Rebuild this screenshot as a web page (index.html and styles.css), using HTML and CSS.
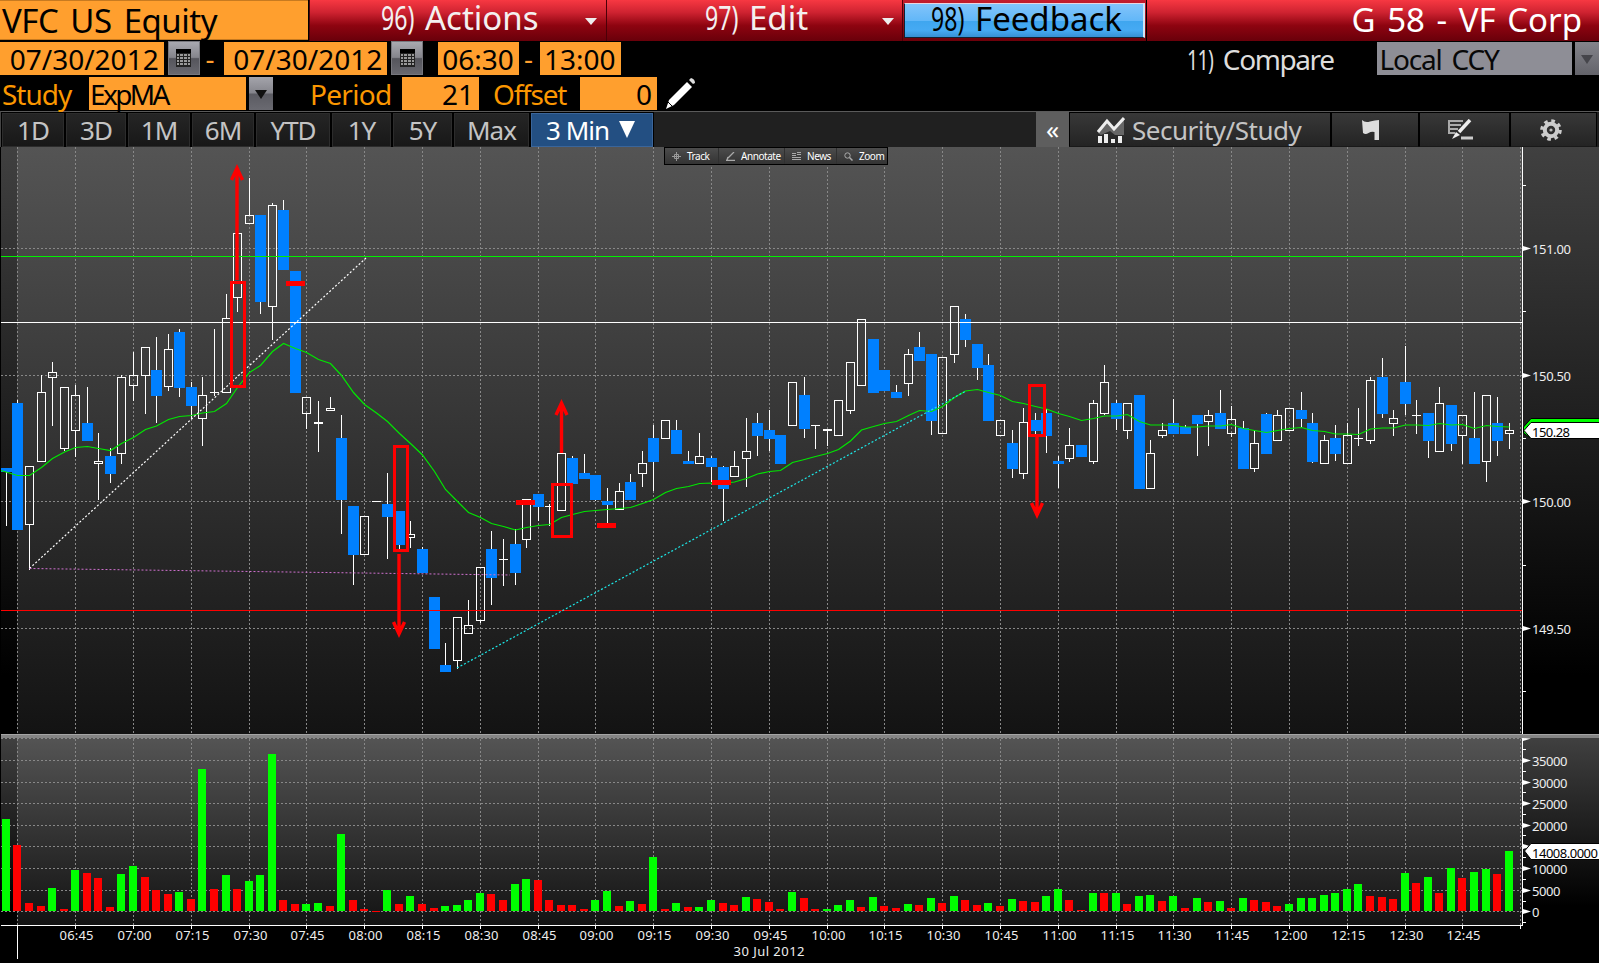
FILE: index.html
```html
<!DOCTYPE html>
<html lang="en">
  <head>
    <meta charset="utf-8" />
    <title>VFC US Equity - Intraday Chart</title>
    <link rel="stylesheet" href="styles.css">
  </head>
  <body>
    <header class="title-bar">
      <div class="ticker">VFC US Equity</div>
      <div class="menu menu-actions"><span class="num">96)</span><span class="menu-label">Actions</span><i class="caret"></i></div>
      <div class="menu menu-edit"><span class="num">97)</span><span class="menu-label">Edit</span><i class="caret"></i></div>
      <div class="menu menu-feedback">
        <div class="feedback"><span class="num">98)</span><span class="menu-label">Feedback</span></div>
      </div>
      <div class="page-title">G 58 - VF Corp</div>
    </header>

    <div class="row dates">
      <div class="field date">07/30/2012</div>
      <div class="cal-btn">
        <svg width="15" height="18" viewBox="0 0 15 18">
          <rect width="15" height="18" fill="#222" />
          <path d="M1 5h2v2H1zM4 5h3v2H4zM8 5h3v2H8zM12 5h2v2h-2zM1 8h2v2H1zM4 8h3v2H4zM8 8h3v2H8zM12 8h2v2h-2zM1 11h2v2H1zM4 11h3v2H4zM8 11h3v2H8zM12 11h2v2h-2zM1 14h2v2H1zM4 14h3v2H4zM8 14h3v2H8zM12 14h2v2h-2z" fill="#999" />
          <path d="M0 0h15v4H0z" fill="#000" />
        </svg>
      </div>
      <div class="dash wide">-</div>
      <div class="field date">07/30/2012</div>
      <div class="cal-btn">
        <svg width="15" height="18" viewBox="0 0 15 18">
          <rect width="15" height="18" fill="#222" />
          <path d="M1 5h2v2H1zM4 5h3v2H4zM8 5h3v2H8zM12 5h2v2h-2zM1 8h2v2H1zM4 8h3v2H4zM8 8h3v2H8zM12 8h2v2h-2zM1 11h2v2H1zM4 11h3v2H4zM8 11h3v2H8zM12 11h2v2h-2zM1 14h2v2H1zM4 14h3v2H4zM8 14h3v2H8zM12 14h2v2h-2z" fill="#999" />
          <path d="M0 0h15v4H0z" fill="#000" />
        </svg>
      </div>
      <div class="field time">06:30</div>
      <div class="dash">-</div>
      <div class="field time">13:00</div>
      <div class="compare"><span class="num">11)</span><span>Compare</span></div>
      <div class="currency">Local CCY</div>
      <div class="drop-btn disabled"><i class="caret"></i></div>
    </div>

    <div class="row study">
      <div class="label study-label">Study</div>
      <div class="field study-name">ExpMA</div>
      <div class="drop-btn"><i class="caret"></i></div>
      <div class="label period-label">Period</div>
      <div class="field number">21</div>
      <div class="label offset-label">Offset</div>
      <div class="field number">0</div>
      <svg class="pencil" width="31" height="32" viewBox="0 0 31 32">
        <path d="M1 31l3-9L22 4l5 5L9 27z" fill="#fff" />
        <path d="M24 2l2-2q4 1 4 5l-2 1z" fill="#ddd" />
        <path d="M3 24l5 5" stroke="#000" stroke-width="1" />
      </svg>
    </div>

    <nav class="toolbar">
      <div class="range r-1d">1D</div>
      <div class="range r-3d">3D</div>
      <div class="range r-1m">1M</div>
      <div class="range r-6m">6M</div>
      <div class="range r-ytd">YTD</div>
      <div class="range r-1y">1Y</div>
      <div class="range r-5y">5Y</div>
      <div class="range r-max">Max</div>
      <div class="range interval">3 Min<i class="caret"></i></div>
      <div class="collapse">«</div>
      <div class="tool security">
        <svg width="28" height="26" viewBox="0 0 28 26">
          <path d="M1 16L10 5l7 8L27 2v16H18l-5-4-9 4z" fill="#666" />
          <path d="M1 15L10 4l7 8L27 1" fill="none" stroke="#eee" stroke-width="3" />
          <path d="M1 19h4v7H1zM7 17h4v9H7zM14 22h4v4h-4zM21 19h4v7h-4z" fill="#eee" />
        </svg>
        <span>Security/Study</span>
      </div>
      <div class="tool flag">
        <svg width="18" height="22" viewBox="0 0 18 22">
          <path d="M0 1q3 3 8 1.500T17 1v20h-4.500V13q-3-1-6 1T1 14z" fill="#ddd" />
        </svg>
      </div>
      <div class="tool notes">
        <svg width="25" height="21" viewBox="0 0 25 21">
          <path d="M1 2h14M2 6h11M1 10h9M1 14h6M1 1v14" stroke="#aaa" stroke-width="2" fill="none" />
          <path d="M22 1L11 13" stroke="#eee" stroke-width="3.500" />
          <path d="M4 20l4-7 4 3z" fill="#eee" />
          <path d="M13 19h12" stroke="#ccc" stroke-width="3" />
        </svg>
      </div>
      <div class="tool gear">
        <svg width="22" height="22" viewBox="0 0 22 22">
          <circle cx="11" cy="11" r="9.200" fill="none" stroke="#ccc" stroke-width="3.200" stroke-dasharray="3.600 3.625" />
          <circle cx="11" cy="11" r="6.200" fill="none" stroke="#ccc" stroke-width="4" />
          <circle cx="11" cy="11" r="1.600" fill="#bbb" />
        </svg>
      </div>
    </nav>

    <main class="chart-area">
      <svg id="chart" class="chart" width="1599" height="816" viewBox="0 147 1599 816">
        <defs>
          <linearGradient id="plotFill" x1="0" y1="0" x2="0" y2="1">
            <stop offset="0" stop-color="#545454" />
            <stop offset="1" stop-color="#131313" />
          </linearGradient>
          <linearGradient id="sideFill" x1="0" y1="0" x2="0" y2="1">
            <stop offset="0" stop-color="#404040" />
            <stop offset="0.9" stop-color="#000" />
          </linearGradient>
        </defs>
      </svg>
      <div class="chart-tools">
        <div class="chart-tool track">
          <svg width="9" height="9" viewBox="0 0 9 9"><path d="M4.500 0v9M0 4.500h9M2.500 2.500h4v4h-4z" stroke="#999" fill="none" /></svg>
          <span>Track</span>
        </div>
        <div class="chart-tool annotate">
          <svg width="9" height="9" viewBox="0 0 9 9"><path d="M8 0L2 6M0 8.500h9M1 8l1-3" stroke="#aaa" stroke-width="1.300" fill="none" /></svg>
          <span>Annotate</span>
        </div>
        <div class="chart-tool news">
          <svg width="9" height="9" viewBox="0 0 9 9"><path d="M0 1.500h4M5 .5h4M5 2.500h4M0 3.500h4M0 5.500h9M0 7.500h9" stroke="#aaa" fill="none" /></svg>
          <span>News</span>
        </div>
        <div class="chart-tool zoom">
          <svg width="9" height="9" viewBox="0 0 9 9"><circle cx="3.500" cy="3.500" r="2.700" stroke="#aaa" fill="none" /><path d="M5.500 5.500L8.500 8.500" stroke="#aaa" stroke-width="1.500" /></svg>
          <span>Zoom</span>
        </div>
      </div>
    </main>

    <script src="chart.js"></script>
  </body>
</html>
```
FILE: styles.css
```css
* {
  box-sizing: border-box;
}

body {
  margin: 0;
  width: 1599px;
  height: 963px;
  overflow: hidden;
  background: #000;
  color: #ddd;
  font-family: "Noto Sans", sans-serif;
  font-size: 28px;
  white-space: nowrap;
}

.num {
  display: inline-block;
  transform: scaleX(0.7);
  transform-origin: left center;
}

.caret {
  display: block;
  border: 6px solid transparent;
  border-bottom: none;
  border-top: 7px solid #eee;
}

/* title bar */
.title-bar {
  display: flex;
  height: 41px;
  font-size: 33px;
}

.ticker {
  width: 308px;
  height: 40px;
  padding-left: 2px;
  line-height: 40px;
  letter-spacing: -0.5px;
  word-spacing: 4px;
  background: #ff9f2e;
  border-top: 1px solid #c77a20;
  border-bottom: 1px solid #c77a20;
  color: #000;
}

.menu,
.page-title {
  background: linear-gradient(#f73842, #cf2331 30%, #8e0410 62%, #69000a);
  color: #f4f0f0;
}

.menu {
  display: flex;
  line-height: 36px;
  border-left: 1px solid #4c0007;
}

.menu .num {
  width: 44px;
}

.menu .caret {
  margin-top: 18px;
}

.menu-actions {
  width: 297px;
  margin-left: 1px;
  padding-left: 71px;
}

.menu-actions .menu-label {
  width: 160px;
}

.menu-edit {
  width: 296px;
  padding-left: 98px;
}

.menu-edit .menu-label {
  width: 133px;
}

.menu-feedback {
  width: 244px;
  padding: 3px 1px 3px 1px;
  background: linear-gradient(#c41c2c, #6c000a);
}

.feedback {
  display: flex;
  width: 242px;
  height: 35px;
  padding-left: 26px;
  line-height: 30px;
  background: linear-gradient(#82c4fa, #62b7f8 50%, #3fa6ef 52%, #46aaf3 80%, #3790d3);
  border: 1px solid #123;
  border-top: 1px solid #e8d5e0;
  border-right: 2px solid #cfe4f5;
  color: #000;
}

.page-title {
  flex: 1;
  margin-left: 1px;
  padding-right: 17px;
  line-height: 40px;
  text-align: right;
  word-spacing: 3px;
  color: #fff;
}

/* input rows */
.row {
  display: flex;
  height: 34px;
  line-height: 34px;
}

.dates {
  margin-top: 1px;
}

.study {
  margin-top: 1px;
}

.field {
  height: 33px;
  background: #ff9f2e;
  color: #000;
}

.date {
  width: 164px;
  padding-right: 5px;
  text-align: right;
}

.cal-btn {
  display: flex;
  justify-content: center;
  align-items: center;
  width: 32px;
  height: 34px;
  margin: -1px 0 0 4px;
  background: linear-gradient(#a9a9b0, #85858c 48%, #55555c 52%, #68686f);
  border: 1px solid #77777d;
}

.dash {
  width: 21px;
  padding-left: 5px;
  color: #ff9f2e;
  line-height: 32px;
}

.dash.wide {
  width: 24px;
  padding-left: 6px;
}

.time {
  width: 81px;
  padding-left: 4px;
}

.cal-btn + .time {
  margin-left: 15px;
}

.compare {
  display: flex;
  width: 191px;
  margin-left: 566px;
  letter-spacing: -1.4px;
}

.compare .num {
  width: 36px;
  letter-spacing: -1px;
}

.currency {
  width: 195px;
  height: 33px;
  padding-left: 2px;
  background: #8e8e96;
  color: #080808;
  letter-spacing: -1.2px;
  word-spacing: 4px;
}

.drop-btn {
  width: 24px;
  height: 33px;
  margin-left: 3px;
  padding: 13px 6px;
  background: linear-gradient(#a4a4ab, #85858c 48%, #5b5b62 52%, #6a6a71);
}

.drop-btn .caret {
  border-width: 9px 6px 0;
  border-top-color: #111;
}

.drop-btn.disabled {
  background: linear-gradient(#84848b, #63636a);
}

.drop-btn.disabled .caret {
  border-top-color: #45454b;
}

.label {
  color: #fb9700;
}

.study-label {
  width: 89px;
  padding-left: 2px;
  letter-spacing: -1px;
}

.study-name {
  width: 157px;
  padding-left: 1px;
  letter-spacing: -2.6px;
}

.period-label {
  width: 129px;
  padding-left: 37px;
  letter-spacing: -0.7px;
}

.offset-label {
  width: 101px;
  padding-left: 14px;
  letter-spacing: -1.2px;
}

.number {
  width: 77px;
  padding-right: 5px;
  text-align: right;
}

.pencil {
  margin: 1px 0 0 8px;
}

/* toolbar */
.toolbar {
  display: flex;
  height: 36px;
  padding-left: 1px;
  background: #202020;
  border-top: 1px solid #5a5a5a;
  border-left: 1px solid #444;
  font-size: 26px;
  line-height: 32px;
}

.range {
  height: 34px;
  margin: 1px 2px 0 0;
  background: linear-gradient(#252525, #181818);
  border: 1px solid #2c2c2c;
  outline: 1px solid #000;
  color: #c4c4c4;
  text-align: center;
  letter-spacing: -1px;
}

.r-1d,
.r-1m,
.r-6m {
  width: 62px;
}

.r-3d {
  width: 60px;
}

.r-ytd {
  width: 74px;
}

.r-max {
  width: 75px;
}

.r-1y,
.r-5y {
  width: 59px;
}

.interval {
  display: flex;
  width: 122px;
  padding-left: 14px;
  background: #234f82;
  border-color: #3a659a;
  color: #fff;
}

.interval .caret {
  margin: 7px 0 0 10px;
  border-width: 17px 8.500px 0;
  border-top-color: #fff;
}

.collapse {
  width: 33px;
  margin-left: 381px;
  background: #5e5e5e;
  color: #fff;
  line-height: 34px;
  text-align: center;
}

.tool {
  display: flex;
  align-items: center;
  justify-content: center;
  height: 35px;
  background: linear-gradient(#383838, #242424);
  border: 1px solid #000;
  border-bottom-color: #191919;
  color: #c4c4c4;
}

.security {
  width: 262px;
  justify-content: flex-start;
  padding-left: 27px;
  gap: 7px;
  letter-spacing: -0.5px;
}

.flag {
  width: 88px;
  padding-right: 9px;
}

.notes {
  width: 91px;
  padding-right: 8px;
}

.gear {
  width: 87px;
  padding-right: 6px;
}

/* chart */
.chart-area {
  position: relative;
  height: 816px;
}

.chart {
  display: block;
}

.chart text {
  font-size: 13px;
  fill: #eee;
}

.chart .tag-text {
  fill: #000;
}

.grid {
  stroke: #888;
  stroke-dasharray: 2 2;
}

.chart-tools {
  position: absolute;
  left: 664px;
  top: 0;
  display: flex;
  width: 224px;
  height: 18px;
  border: 1px solid #000;
  background: linear-gradient(#4c4c4c, #333);
  font-size: 10px;
  line-height: 15px;
  color: #fff;
  letter-spacing: -0.45px;
}

.chart-tool {
  display: flex;
  align-items: center;
  padding-left: 7px;
  border-right: 1px solid #303030;
}

.track {
  width: 54px;
  gap: 6px;
}

.annotate {
  width: 66px;
  gap: 6px;
}

.news {
  width: 52px;
  gap: 6px;
}

.zoom {
  flex: 1;
  gap: 6px;
  border-right: none;
}
```
FILE: chart.js
```js
const svg = document.getElementById("chart");
const NS = "http://www.w3.org/2000/svg";

// one entry per 3 minute bar: type, wick top, body top, body bottom, wick bottom
// b = down (filled), w = up (hollow)
const candles = `b468,468,472,526 b400,403,530,530 w466,466,525,570 w375,392,462,462 w362,372,378,426
w387,387,449,451 w385,395,431,457 b387,423,441,441 w433,461,464,500 b448,456,474,483
w375,377,454,464 w352,375,386,401 w347,347,376,414 b337,370,396,423 w334,349,387,391
b329,332,388,397 b382,387,406,419 w377,395,419,446 w329,392,393,396 w294,318,393,393
w233,233,298,312 w178,215,224,224 b215,215,302,314 w203,205,307,340 b200,210,270,270
b271,271,393,393 w397,397,414,429 w401,422,424,452 w397,408,411,411 b415,438,500,534
b506,506,555,585 w516,516,555,555 w501,501,502,502 b473,504,517,559 b511,511,545,549
w521,534,538,548 b547,549,573,573 b597,597,649,649 b643,665,672,672 w617,617,661,669
w600,625,634,634 w567,567,621,623 b531,549,578,605 w539,559,560,586 b529,544,573,585
w499,499,540,548 b494,494,507,521 w504,506,507,526 w453,453,511,511 b456,458,484,484
b454,473,479,479 b475,475,500,501 b488,501,505,523 w483,491,510,510 b474,482,500,500
w451,463,474,487 b425,438,462,491 w420,420,439,439 b420,430,454,454 b451,461,464,464
w433,456,464,464 b456,458,467,482 b466,467,489,521 w451,466,477,477 w418,451,459,487
b413,423,436,456 b410,430,439,451 b435,435,464,464 w382,382,426,426 b377,395,429,438
w425,425,426,449 w429,429,431,446 w400,400,436,436 w362,362,411,414 w319,319,386,386
b339,339,393,393 b370,370,391,391 b385,392,398,398 w349,354,384,396 b332,347,361,361
b354,354,421,435 w357,357,434,434 w306,306,355,363 b314,319,340,347 b344,344,368,380
b354,365,421,421 w420,420,436,436 b430,443,469,478 w408,422,474,479 b413,420,431,435
b409,413,436,453 b456,461,464,488 w428,445,459,462 b445,445,457,457 w400,403,462,464
w365,382,414,415 b400,403,419,430 w403,403,431,439 b395,395,489,489 w440,453,489,489
w423,430,436,438 b399,423,434,434 b425,427,434,434 b415,415,424,456 w410,415,422,446
b390,413,429,429 w406,419,434,437 b421,428,469,469 w430,443,469,472 b413,414,454,454
w410,415,441,441 w408,408,431,431 b392,410,419,427 b413,423,462,463 w435,440,464,464
b425,438,454,461 w423,435,464,464 w408,438,439,446 w377,380,441,444 b358,377,414,418
w410,418,424,436 b346,382,404,415 w400,415,416,434 b413,413,441,458 w387,403,452,452
b405,405,444,451 w415,415,436,464 b392,438,464,464 w395,395,462,482 b397,423,441,456
w423,430,434,449`.split(/\s+/);

const ema = [470, 475, 475, 467, 458, 451.5, 447, 446, 448, 450, 443, 437, 429, 425.5, 419, 416,
  415, 412.5, 411, 403, 387, 372, 365, 351, 343, 348, 352, 359, 363, 375, 392, 404, 412.5, 421,
  433, 443, 454.5, 471, 489, 501, 512, 517, 523, 526, 529.5, 527, 525, 524, 517, 514, 511, 510,
  509, 508, 507, 503, 499, 492, 488, 486, 483, 482.5, 483, 481.5, 478, 473.5, 471, 470, 462, 459,
  456, 453, 449, 440.5, 429.5, 426, 423, 421, 415, 410, 411, 406, 397, 390.5, 389, 392, 395, 401,
  403, 406, 408.5, 413, 416, 420, 418, 415.5, 415.5, 414, 421, 424.5, 424.5, 425, 426.5, 426.5,
  425.5, 425.5, 424, 428, 430, 432, 430, 428, 427, 430, 431, 433.5, 433.5, 434, 428.5, 427.5,
  427.5, 424.5, 424.5, 425, 423, 424.5, 424, 428, 425, 426, 426.5];

// volume bars: g/r and top edge
const volumes = `g819 r845 r903 r906 g888 r909 g870 r873 r878 r907 g874 g866 r877 r890 r894 g892 r899
g769 r889 g875 r889 g881 g875 g754 r900 r904 g904 g903 r906 g834 r900 r909 r911 g890 r904 g896
r904 r908 g906 g905 g900 g893 r894 r900 g884 g879 r880 r900 r905 r905 r909 g900 g891 r906 g901
r904 g857 r909 g903 r907 g907 g900 r903 r905 g897 r899 r902 r909 g892 r898 r909 g909 g905 g900
r907 g897 r906 r908 g904 r905 g898 r903 g896 r900 r905 g903 r906 g899 r901 r902 g896 g889 r900
r910 g893 r893 g893 r904 g896 g895 r901 g896 r908 g898 r902 g901 r908 g898 r900 r902 r906 g904
g898 g898 g895 g893 g889 g884 r896 r897 r899 g873 r883 g877 r893 g868 r878 g872 g869 r874 g851`.split(/\s+/);

function add(tag, attrs, text) {
  const el = document.createElementNS(NS, tag);
  for (const key in attrs) el.setAttribute(key, attrs[key]);
  if (text) el.textContent = text;
  svg.appendChild(el);
}

function rect(x, y, width, height, fill) {
  add("rect", { x, y, width, height, fill });
}

function barX(i) {
  return Math.round(17.45 + 11.56 * i);
}

// backgrounds
for (const [y, h] of [[147, 587], [738, 187]]) {
  rect(1, y, 16, h, "url(#sideFill)");
  rect(17, y, 1505, h, "url(#plotFill)");
  rect(1523, y, 76, h, "url(#sideFill)");
}

// grid
const priceRows = [248, 375, 501, 628];
const volumeRows = [738, 760, 782, 803, 825, 846, 868, 890, 911];
for (const y of priceRows.concat(volumeRows)) {
  add("path", { d: `M1 ${y + 0.5}H1522`, class: "grid" });
}
for (let i = 0; i <= 130; i += 5) {
  add("path", { d: `M${barX(i) + 0.5} 147V925`, class: "grid" });
}
rect(1, 734, 1598, 4, "#858585");
rect(1, 734, 1598, 1, "#a5a5a5");

// volume
volumes.forEach((v, n) => {
  const top = Number(v.slice(1));
  rect(barX(n - 1) - 4, top, 8, Math.max(911 - top, 1), v[0] === "g" ? "#0f0" : "#f00");
});

// candles
candles.forEach((c, n) => {
  const x = barX(n - 1);
  const [top, open, close, bottom] = c.slice(1).split(",").map(Number);
  if (open > top) rect(x, top, 1, open - top, "#fff");
  if (bottom > close) rect(x, close, 1, bottom - close, "#fff");
  if (c[0] === "b") {
    const left = Math.max(x - 5, 1);
    rect(left, open, x + 6 - left, close - open, "#0080ff");
  } else if (close - open < 3) {
    rect(x - 4, open, 9, close - open, "#fff");
  } else {
    add("rect", { x: x - 3.5, y: open + 0.5, width: 8, height: close - open - 1, fill: "none", stroke: "#fff" });
  }
});

// levels and moving average
rect(1, 256, 1521, 1, "#00f000");
rect(1, 322, 1521, 1, "#fff");
rect(1, 610, 1521, 1, "#f00");
add("polyline", {
  points: ema.map((y, n) => `${n ? barX(n - 1) + 0.5 : 1},${y + 0.5}`).join(" "),
  fill: "none", stroke: "#00e800", "stroke-width": 1.2
});

// trend lines
add("path", { d: "M29.5 568.5L366 258", stroke: "#fff", "stroke-width": 1.2, "stroke-dasharray": "2 2" });
add("path", { d: "M29.5 568.5L510 575", stroke: "#d070d0", "stroke-dasharray": "2 2" });
add("path", { d: "M457 668L966 391", stroke: "#1ce8e8", "stroke-width": 1.2, "stroke-dasharray": "2 2" });

// annotations
const red = { fill: "none", stroke: "#f00", "stroke-width": 3 };
for (const [x1, y1, x2, y2] of [[230, 281, 246, 388], [393, 445, 409, 552], [551, 483, 573, 538], [1028, 384, 1046, 437]]) {
  add("rect", { x: x1 + 1.5, y: y1 + 1.5, width: x2 - x1 - 3, height: y2 - y1 - 3, ...red });
}
for (const [x, tip, tail] of [[237, 168, 280], [399, 634, 554], [561.5, 403, 453], [1037, 515, 437]]) {
  const back = tip + (tail > tip ? 12 : -12);
  add("path", { d: `M${x} ${tail}V${tip}M${x - 5.5} ${back}L${x} ${tip}L${x + 5.5} ${back}`, ...red, "stroke-width": 3.4 });
}
for (const [x, y] of [[286, 281], [516, 500], [597, 523], [712, 480]]) {
  rect(x, y, 19, 5, "#f00");
}

// price and volume axes
rect(1522, 147, 1, 587, "#fff");
rect(1522, 738, 1, 188, "#fff");
for (const y of [185, 311, 438, 565, 691, 749, 771, 792, 814, 835, 857, 879, 901, 922]) {
  rect(1523, y, 3, 1, "#fff");
}
for (const y of priceRows.concat(volumeRows)) {
  const top = y === 738 ? y : y - 2;
  add("path", { d: `M1523 ${top}L1531 ${y + 0.5}L1523 ${y + 3}z`, fill: "#fff" });
}
["151.00", "150.50", "150.00", "149.50"].forEach((label, n) => {
  add("text", { x: 1532, y: priceRows[n] + 6, textLength: 39 }, label);
});
["35000", "30000", "25000", "20000", "", "10000", "5000", "0"].forEach((label, n) => {
  if (label) add("text", { x: 1532, y: volumeRows[n + 1] + 6, textLength: label.length * 7.1 }, label);
});

// last value tags
add("path", { d: "M1600 418.500H1531L1523.500 427V433L1531 438.500H1600z", fill: "#0f0", stroke: "#000" });
add("path", { d: "M1600 422.500H1531L1524 430.500L1531 438.500H1600z", fill: "#fff", stroke: "#000" });
add("text", { x: 1532, y: 437, textLength: 38, class: "tag-text" }, "150.28");
add("path", { d: "M1600 843.500H1531L1524.500 851L1531 859.500H1600z", fill: "#fff", stroke: "#000" });
add("text", { x: 1532, y: 858, textLength: 66, class: "tag-text" }, "14008.0000");

// time axis
rect(1, 925, 1522, 1, "#fff");
rect(17, 925, 1, 34, "#fff");
for (let i = 5; i <= 130; i += 5) {
  rect(barX(i), 926, 1, 3, "#fff");
  if (i === 130) break;
  const minutes = 390 + i * 3;
  const label = String(Math.floor(minutes / 60)).padStart(2, "0") + ":" + String(minutes % 60).padStart(2, "0");
  add("text", { x: barX(i) - 15.5, y: 940, textLength: 34 }, label);
}
add("text", { x: 733.5, y: 956, textLength: 71 }, "30 Jul 2012");
```
